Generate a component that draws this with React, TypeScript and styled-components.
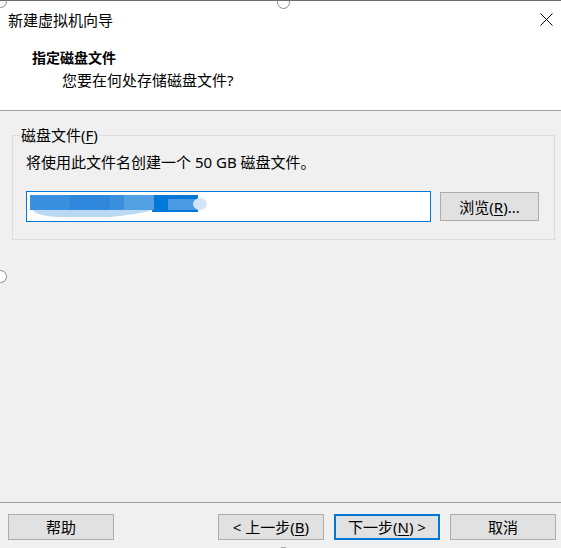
import styled, { createGlobalStyle } from "styled-components";

const GlobalStyle = createGlobalStyle`
  html, body {
    margin: 0;
    padding: 0;
    background: #f0f0f0;
  }
  body {
    font-family: "Noto Sans", "Noto Sans CJK SC", sans-serif;
    color: #000;
  }
`;

const Window = styled.div`
  position: relative;
  width: 561px;
  height: 548px;
  overflow: hidden;
  display: flex;
  flex-direction: column;
  background: #f0f0f0;
  border-top: 1px solid #6e6e6e;
  box-sizing: border-box;
`;

const Header = styled.header`
  background: #fff;
  height: 109px;
  border-bottom: 1px solid #a0a0a0;
  display: flex;
  flex-direction: column;
`;

const TitleBar = styled.div`
  display: flex;
  align-items: center;
  justify-content: space-between;
  height: 37px;
  padding: 0 8px;
`;

const Title = styled.span`
  font-size: 15px;
  line-height: 15px;
  color: #000;
  padding-top: 2px;
`;

const CloseBtn = styled.button`
  width: 14px;
  height: 14px;
  padding: 0;
  border: 0;
  background: transparent;
  display: flex;
  align-items: center;
  justify-content: center;
`;

const Heading = styled.h1`
  margin: 12px 0 0 32px;
  font-size: 14px;
  line-height: 16px;
  font-weight: 700;
`;

const SubHeading = styled.p`
  margin: 6px 0 0 62px;
  font-size: 15px;
  line-height: 16px;
`;

const Body = styled.main`
  flex: 1;
  padding: 16px 7px 0 12px;
`;

const GroupBox = styled.fieldset`
  margin: 0;
  padding: 11px 15px 15px 13px;
  border: 1px solid #dcdcdc;
  width: 542px;
  height: 113px;
  box-sizing: border-box;
`;

const Legend = styled.legend`
  padding: 0 1px;
  margin-left: -6px;
  font-size: 15px;
  line-height: 16px;
`;

const Underline = styled.span`
  text-decoration: underline;
  text-underline-offset: 2px;
`;

const Hint = styled.p`
  margin: 0;
  font-size: 15px;
  line-height: 16px;
`;

const FieldRow = styled.div`
  display: flex;
  align-items: center;
  gap: 9px;
  margin-top: 21px;
`;

const PathInput = styled.div`
  position: relative;
  width: 405px;
  height: 31px;
  box-sizing: border-box;
  border: 1px solid #0078d7;
  background: #fff;
`;

const Redacted = styled.div`
  position: absolute;
  left: 3px;
  top: 2px;
  width: 178px;
  height: 24px;
`;

const Button = styled.button<{ $primary?: boolean }>`
  width: 106px;
  height: 26px;
  box-sizing: border-box;
  background: #e1e1e1;
  border: ${(p) => (p.$primary ? "2px solid #0078d7" : "1px solid #adadad")};
  font-family: "Noto Sans", "Noto Sans CJK SC", sans-serif;
  font-size: 15px;
  line-height: 16px;
  color: #000;
  padding: 0;
  display: flex;
  align-items: center;
  justify-content: center;
`;

const BrowseButton = styled(Button)`
  width: 99px;
  height: 29px;
`;

const Footer = styled.footer`
  border-top: 1px solid #a0a0a0;
  height: 46px;
  display: flex;
  align-items: flex-start;
  padding: 11px 5px 0 8px;
  box-sizing: border-box;
`;

const Spacer = styled.div`
  flex: 1;
`;

const ButtonGroup = styled.div`
  display: flex;
  gap: 10px;
`;

const Handle = styled.span<{ $x: number; $y: number }>`
  position: absolute;
  left: ${(p) => p.$x - 6}px;
  top: ${(p) => p.$y - 6}px;
  width: 11px;
  height: 11px;
  border-radius: 50%;
  border: 1px solid #8a8a8a;
  background: #fff;
`;

export default function App() {
  return (
    <>
      <GlobalStyle />
      <Window>
        <Header>
          <TitleBar>
            <Title>新建虚拟机向导</Title>
            <CloseBtn aria-label="关闭">
              <svg width="13" height="13" viewBox="0 0 13 13">
                <path d="M0.5 0.5 L12.5 12.5 M12.5 0.5 L0.5 12.5" stroke="#000" strokeWidth="1" />
              </svg>
            </CloseBtn>
          </TitleBar>
          <Heading>指定磁盘文件</Heading>
          <SubHeading>您要在何处存储磁盘文件?</SubHeading>
        </Header>

        <Body>
          <GroupBox>
            <Legend>
              磁盘文件(<Underline>F</Underline>)
            </Legend>
            <Hint>将使用此文件名创建一个 50 GB 磁盘文件。</Hint>
            <FieldRow>
              <PathInput>
                <Redacted>
                  <svg width="178" height="24" viewBox="0 0 178 24">
                    <rect x="122" y="1" width="46" height="17" fill="#0078d7" />
                    <rect x="0" y="1" width="124" height="15" fill="#3a8fdf" />
                    <rect x="40" y="1" width="40" height="15" fill="#2f88dc" />
                    <rect x="94" y="1" width="30" height="15" fill="#53a0e3" />
                    <rect x="138" y="5" width="30" height="11" fill="#4b9be2" />
                    <ellipse cx="170" cy="10" rx="7" ry="6" fill="#d2e5f6" />
                    <path d="M3 16 Q6 22 30 23 L80 23 Q110 20 122 16 Z" fill="#b9d8f1" />
                  </svg>
                </Redacted>
              </PathInput>
              <BrowseButton>
                浏览(<Underline>R</Underline>)...
              </BrowseButton>
            </FieldRow>
          </GroupBox>
        </Body>

        <Footer>
          <Button>帮助</Button>
          <Spacer />
          <ButtonGroup>
            <Button>
              &lt; 上一步(<Underline>B</Underline>)
            </Button>
            <Button $primary>
              下一步(<Underline>N</Underline>) &gt;
            </Button>
            <Button>取消</Button>
          </ButtonGroup>
        </Footer>

        <Handle $x={0} $y={0} />
        <Handle $x={283} $y={1} />
        <Handle $x={0} $y={275} />
        <Handle $x={283} $y={552} />
      </Window>
    </>
  );
}
